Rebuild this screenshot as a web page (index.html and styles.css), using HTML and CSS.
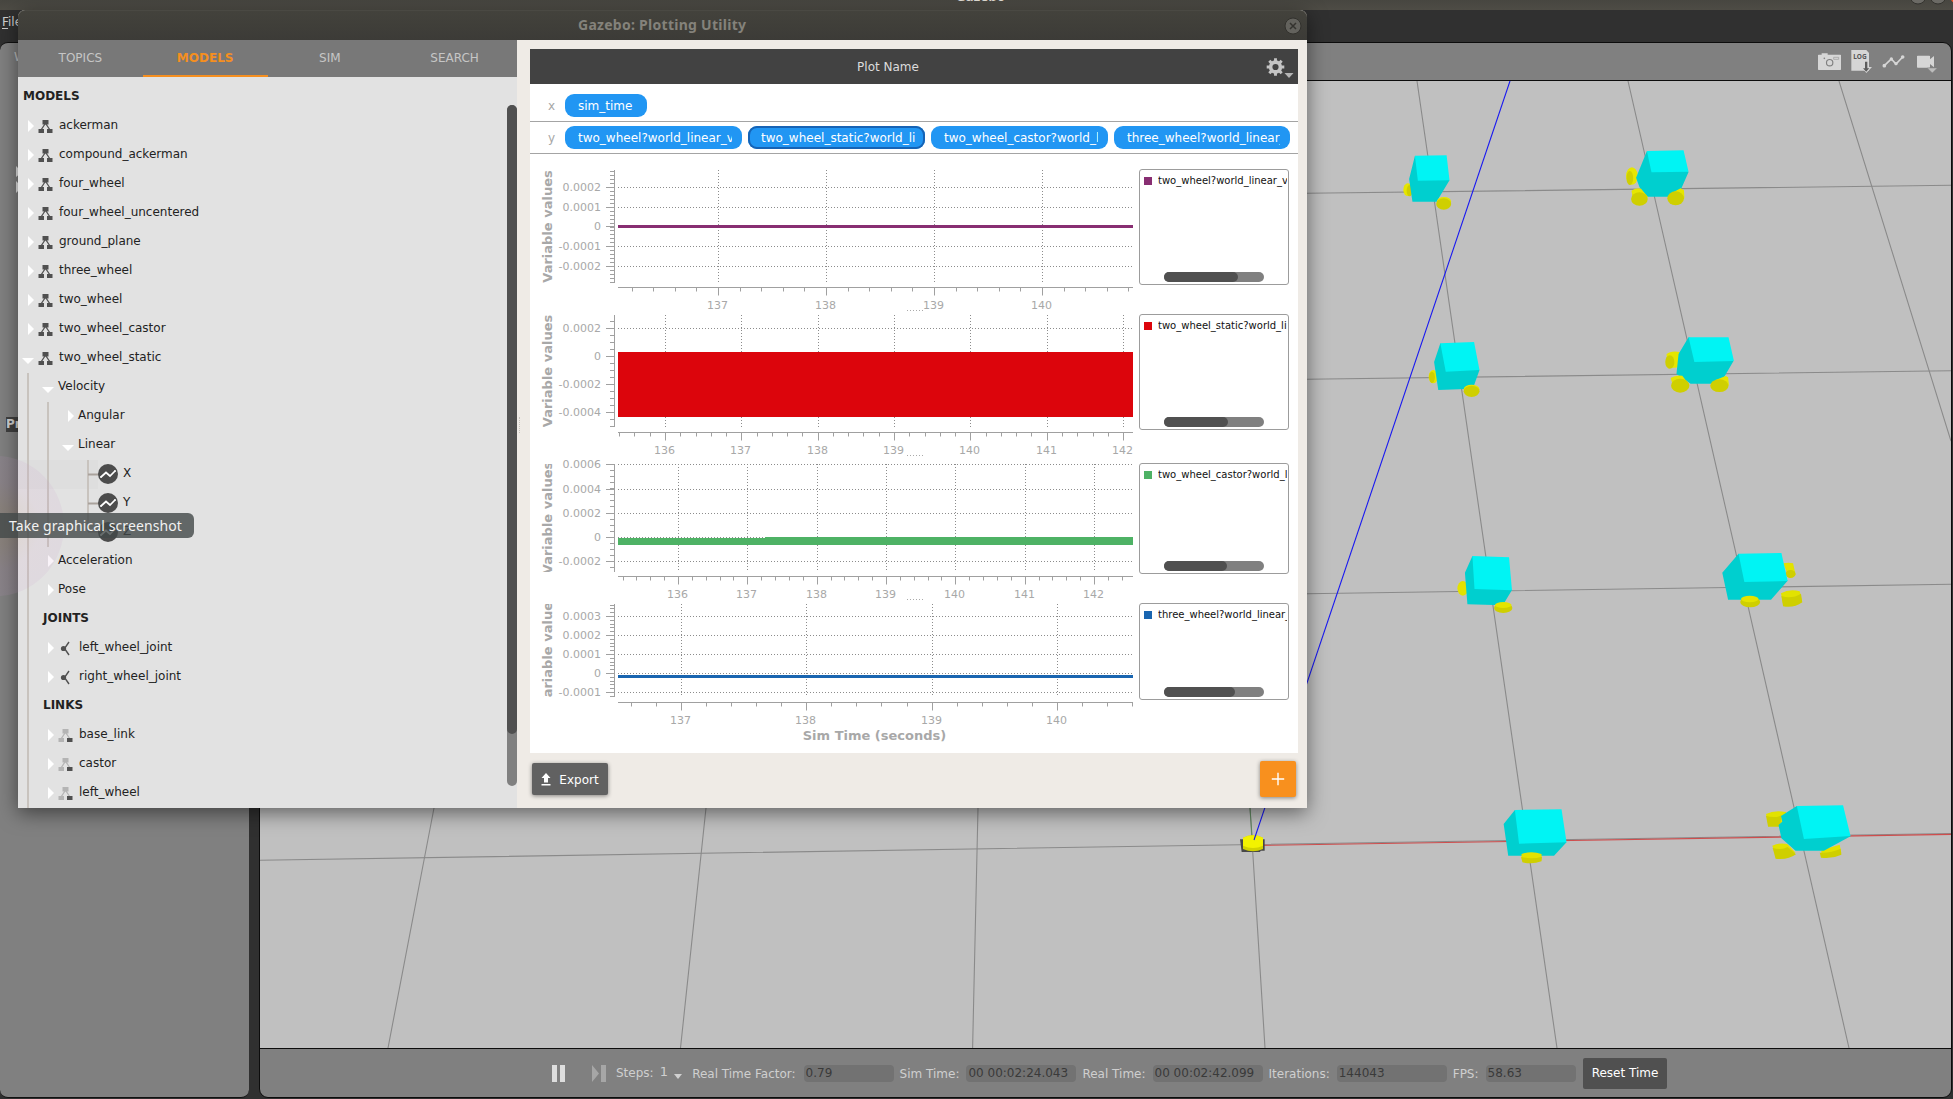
FILE: index.html
```html
<!DOCTYPE html>
<html lang="en">
<head>
<meta charset="utf-8">
<title>Gazebo</title>
<link rel="stylesheet" href="styles.css">
</head>
<body>
<svg class="defs" width="0" height="0">
  <symbol id="closed" viewBox="0 0 14 29"><path d="M6 8l6 6-6 6z" fill="#fff"/></symbol>
  <symbol id="open" viewBox="0 0 14 29"><path d="M0 14h12l-6 6z" fill="#fff"/></symbol>
  <symbol id="model" viewBox="0 0 22 29"><path d="M8 12L4 18M9 12l4 6" stroke="#505050" stroke-width="1.3"/><path d="M5.500 8h6v4.500h-6zM1.500 17h5.500v4h-5.500zM10 17h5.500v4h-5.500z" fill="#505050"/></symbol>
  <symbol id="link" viewBox="0 0 22 29"><path d="M8 12L4 18M9 12l4 6" stroke="#b4b4b4" stroke-width="1.3"/><path d="M5.500 8h6v4.500h-6zM1.500 17h5.500v4h-5.500z" fill="#b4b4b4"/><path d="M10 17h5.500v4h-5.500z" fill="#505050"/></symbol>
  <symbol id="joint" viewBox="0 0 22 29"><path d="M12 8L7.500 14.500 12 21" fill="none" stroke="#505050" stroke-width="1.400"/><circle cx="6.500" cy="14.500" r="2.600" fill="#505050"/></symbol>
  <symbol id="var" viewBox="0 0 20 29"><circle cx="10" cy="14" r="10" fill="#4c4c4c"/><path d="M3 17l5-4.500 4 3.500 5-5" fill="none" stroke="#fff" stroke-width="1.700"/><circle cx="3" cy="17" r="1" fill="#fff"/><circle cx="17" cy="11" r="1" fill="#fff"/></symbol>
</svg>

<div class="app">
  <div class="titlebar"><span class="app-name">Gazebo</span>
    <svg class="win-buttons" width="50" height="10" viewBox="1903 0 50 10"><g fill="#6b6a65" stroke="#34332f"><circle cx="1918" cy="-4" r="8"/><circle cx="1938" cy="-4" r="8"/></g><circle cx="1958" cy="-4" r="8" fill="#e9562b"/></svg>
  </div>
  <div class="menubar"><span><u>F</u>ile</span></div>
  <div class="workspace">
    <aside class="side">
      <div class="side-tab">World</div>
      <svg class="side-arrows" width="10" height="28" viewBox="0 0 10 28"><path d="M0 0l6 6-6 5zM0 15l6 6-6 6z" fill="#e8e8e8"/></svg>
      <div class="side-prop">Property</div>
    </aside>
    <main class="view">
      <div class="toolbar">
        <svg class="i-cam" width="25" height="24" viewBox="72 147 75 72"><path d="M86 164v-4h18v4h38q2 0 2 2v42q0 2-2 2H77q-2 0-2-2v-42q0-2 2-2z" fill="#d6d6d6"/><circle cx="110" cy="188" r="9.500" fill="none" stroke="#808080" stroke-width="3.500"/><path d="M122 172h15v6h-15z" fill="none" stroke="#999" stroke-width="2"/><circle cx="94" cy="175" r="2.500" fill="#808080"/></svg>
        <svg class="i-log" width="22" height="24" viewBox="171 147 66 72"><path d="M175 150h45l8 9v53h-53z" fill="#d6d6d6"/><path d="M205 201h7v-18h15v18h10l-17 18z" fill="#d6d6d6"/><path d="M216 185h7v20h6l-9.500 10-9.500-10h6z" fill="#5c5c5c"/><text x="181" y="176" class="log" textLength="40" lengthAdjust="spacingAndGlyphs">LOG</text></svg>
        <svg class="i-plot" width="25" height="24" viewBox="264 147 75 72"><path d="M274 197l21-20 14 15 20-21" fill="none" stroke="#d6d6d6" stroke-width="5"/><g fill="#d6d6d6"><circle cx="274" cy="197" r="5.500"/><circle cx="295" cy="177" r="5"/><circle cx="309" cy="191" r="5"/><circle cx="329" cy="171" r="5.500"/></g></svg>
        <svg class="i-video" width="23" height="24" viewBox="366 147 69 72"><path d="M374 167h35q2 0 2 2v9l12-10v34l-12-10v9q0 2-2 2h-35q-2 0-2-2v-32q0-2 2-2z" fill="#d6d6d6"/><path d="M403 204h30l-15 15z" fill="#bdbdbd" stroke="#808080" stroke-width="1.500"/></svg>
      </div>
      <svg class="scene" width="1691" height="967" viewBox="260 81 1691 967">
        <g stroke="#8a8a8a" stroke-width="1.100">
          <path d="M1417 81L1557 1048M1628 81L1849 1048M1839 81L1951 441M1250 808L1265 1048M706 808L680.500 1048M978 808L972.600 1048M434 808L388 1048"/>
          <path d="M1307 193.300L1951 185.300M1307 379.300L1951 370.700M1307 593.700L1951 584.300M260 860.300L1951 833.500"/>
        </g>
        <path d="M1250 808l2 28" stroke="#5f8a5f"/>
        <path d="M1262 845.400L1951 834.400" stroke="#cf4d4d" stroke-width="1.100"/>
        <g transform="translate(1200 790) scale(.33333)"><path d="M120 148h74v34h-12l-2 4H125z" fill="#484848"/><path d="M129 143q30-14 60 0v34q-30 14-60 0z" fill="#d2d200"/><path d="M129 143q30-14 60 0v24q-30 14-60 0z" fill="#f3f300"/></g>
        <path d="M1510 81L1254 840" stroke="#1818f0" stroke-width="1.100"/>
        <g transform="translate(1300 0) scale(.41645 .33333)">
          <g fill="#e6e600"><ellipse cx="259" cy="569" rx="11" ry="19"/><ellipse cx="797" cy="528" rx="14" ry="26"/><ellipse cx="320" cy="1130" rx="11" ry="20"/><path d="M880 1063q10-12 32-7v46l-28 3z"/></g>
          <g fill="#cfcf00"><ellipse cx="263" cy="572" rx="7" ry="17"/><ellipse cx="792" cy="534" rx="8" ry="21"/><ellipse cx="317" cy="1132" rx="7" ry="17"/><ellipse cx="888" cy="1086" rx="11" ry="20"/></g>
          <path d="M276 467l-14 70 8 68h58l31-64-60-60zM833 453l-26 80 8 28 16 29h76l26-74-60-50zM337 1030l-15 56 10 84 83-4 16-56-60-50zM933 1012l-24 50-5 60 34 29h71l32-68-60-50z" fill="#00cfcf"/>
          <path d="M276 467l76-1 7 75-76 1zM833 453l88-2 12 64-89 2zM337 1030l81-4 13 84-81 5zM933 1012h96l13 71-95 3z" fill="#00f4f4"/>
          <g fill="#e6e600"><ellipse cx="346" cy="605" rx="17" ry="14"/><path d="M796 572q12-10 23-6l17 26-36 10zM896 577l18-12 8 6 1 24-20 0z"/><path d="M890 1134q12-10 28-7l17 28-38 6zM998 1140l24-12 6 4 2 24-26 0z"/><ellipse cx="412" cy="1168" rx="19" ry="14"/></g>
          <g fill="#cfcf00"><ellipse cx="345" cy="612" rx="18" ry="17"/><ellipse cx="815" cy="597" rx="20" ry="20"/><ellipse cx="902" cy="595" rx="20" ry="21"/><ellipse cx="412" cy="1174" rx="19" ry="17"/><ellipse cx="913" cy="1157" rx="22" ry="21"/><ellipse cx="1007" cy="1157" rx="22" ry="19"/></g>
        </g>
        <g transform="translate(1300 420) scale(.41645 .33333)">
          <g fill="#e2e200"><ellipse cx="391" cy="505" rx="13" ry="22"/><path d="M1160 430q14-4 24 0l6 34-15 10zM1119 1182q20-13 48-6v30l-42 10zM1252 1290l44-16 4 26-48 5z"/></g>
          <g fill="#cfcf00"><ellipse cx="1178" cy="462" rx="12" ry="12"/><path d="M1119 1187q19 9 37-1l-3 34h-29zM1248 1298q26 2 50-12l2 18q-24 14-49 9z"/></g>
          <path d="M414 408l-18 50 6 95 85 3 22-46-60-50zM1053 401l-39 57 14 81h103l40-57-60-50zM516 1170l-27 42 11 95h110l30-40-60-50zM1193 1158l-38 30 3 17-9 10 7 40 34 37h68l64-43-60-60z" fill="#00cfcf"/>
          <path d="M414 408l88 4 7 99-90-4zM1053 401l103-2 15 84-104 3zM516 1170l112-2 12 99-114 4zM1193 1158l111-2 18 92-112 9z" fill="#00f4f4"/>
          <path d="M1155 520q20-14 45-6l6 33-46 6zM532 1302q24-10 48 0v16h-48zM1134 1277q18-10 36-5l20 26-48 6z" fill="#e2e200"/>
          <path d="M1156 528q25 10 47-7l3 26q-20 18-46 12zM531 1310q24 9 50 0l-1 14q-22 10-46 3zM1135 1284q22 7 36-3l20 22q-20 18-49 13z" fill="#cfcf00"/>
          <g fill="#cfcf00"><ellipse cx="488" cy="564" rx="22" ry="15"/><ellipse cx="1081" cy="546" rx="24" ry="16"/></g>
          <g fill="#e4e400"><ellipse cx="488" cy="555" rx="20" ry="9"/><ellipse cx="1080" cy="537" rx="21" ry="10"/></g>
        </g>
      </svg>
      <footer class="status">
        <svg class="play" width="56" height="20" viewBox="552 1062 56 20"><path d="M552 1064h5v17h-5zM560 1064h5v17h-5z" fill="#dedede"/><path d="M592 1064l7 8.500-7 8.500zM601 1064h5v17h-5z" fill="#a6a6a6"/></svg>
        <span class="lbl steps">Steps:</span><span class="num">1</span><i class="drop"></i>
        <span class="lbl rtf">Real Time Factor:</span><span class="field f90">0.79</span>
        <span class="lbl">Sim Time:</span><span class="field">00 00:02:24.043</span>
        <span class="lbl">Real Time:</span><span class="field">00 00:02:42.099</span>
        <span class="lbl">Iterations:</span><span class="field">144043</span>
        <span class="lbl">FPS:</span><span class="field f90">58.63</span>
        <span class="reset">Reset Time</span>
      </footer>
    </main>
  </div>
</div>

<section class="dialog">
  <header class="dlg-title"><span>Gazebo: Plotting Utility</span><svg width="18" height="18" viewBox="0 0 18 18"><circle cx="9" cy="9" r="8" fill="#63625d" stroke="#32312d"/><path d="M6 6l6 6M12 6l-6 6" stroke="#34332f" stroke-width="1.500"/></svg></header>
  <div class="dlg-body">
    <div class="left">
      <nav class="tabs"><span>TOPICS</span><span class="on">MODELS</span><span>SIM</span><span>SEARCH</span></nav>
      <div class="tree">
        <div class="hl"></div>
        <svg class="guides" width="90" height="731" viewBox="18 77 90 731"><path d="M28 373v435M48 402v145M88 460v72" stroke="#c8c3be" stroke-width="2"/><path d="M88 474.500h11M88 503.500h11M88 531.500h11" stroke="#a9a29c" stroke-width="2"/></svg>
        <div class="row head">MODELS</div>
        <div class="row"><svg class="a"><use href="#closed"/></svg><svg class="m"><use href="#model"/></svg>ackerman</div>
        <div class="row"><svg class="a"><use href="#closed"/></svg><svg class="m"><use href="#model"/></svg>compound_ackerman</div>
        <div class="row"><svg class="a"><use href="#closed"/></svg><svg class="m"><use href="#model"/></svg>four_wheel</div>
        <div class="row"><svg class="a"><use href="#closed"/></svg><svg class="m"><use href="#model"/></svg>four_wheel_uncentered</div>
        <div class="row"><svg class="a"><use href="#closed"/></svg><svg class="m"><use href="#model"/></svg>ground_plane</div>
        <div class="row"><svg class="a"><use href="#closed"/></svg><svg class="m"><use href="#model"/></svg>three_wheel</div>
        <div class="row"><svg class="a"><use href="#closed"/></svg><svg class="m"><use href="#model"/></svg>two_wheel</div>
        <div class="row"><svg class="a"><use href="#closed"/></svg><svg class="m"><use href="#model"/></svg>two_wheel_castor</div>
        <div class="row"><svg class="a"><use href="#open"/></svg><svg class="m"><use href="#model"/></svg>two_wheel_static</div>
        <div class="row l1 plain"><svg class="a"><use href="#open"/></svg>Velocity</div>
        <div class="row l2 plain"><svg class="a"><use href="#closed"/></svg>Angular</div>
        <div class="row l2 plain"><svg class="a"><use href="#open"/></svg>Linear</div>
        <div class="row l3"><svg class="v"><use href="#var"/></svg>X</div>
        <div class="row l3"><svg class="v"><use href="#var"/></svg>Y</div>
        <div class="row l3"><svg class="v"><use href="#var"/></svg>Z</div>
        <div class="row l1 plain"><svg class="a"><use href="#closed"/></svg>Acceleration</div>
        <div class="row l1 plain"><svg class="a"><use href="#closed"/></svg>Pose</div>
        <div class="row head h1">JOINTS</div>
        <div class="row l1"><svg class="a"><use href="#closed"/></svg><svg class="m"><use href="#joint"/></svg>left_wheel_joint</div>
        <div class="row l1"><svg class="a"><use href="#closed"/></svg><svg class="m"><use href="#joint"/></svg>right_wheel_joint</div>
        <div class="row head h1">LINKS</div>
        <div class="row l1"><svg class="a"><use href="#closed"/></svg><svg class="m"><use href="#link"/></svg>base_link</div>
        <div class="row l1"><svg class="a"><use href="#closed"/></svg><svg class="m"><use href="#link"/></svg>castor</div>
        <div class="row l1"><svg class="a"><use href="#closed"/></svg><svg class="m"><use href="#link"/></svg>left_wheel</div>
        <div class="vscroll"><div></div></div>
      </div>
    </div>
    <div class="grip"></div>
    <div class="right">
      <div class="canvas">
        <div class="plot-head"><span>Plot Name</span>
          <svg class="gear" width="28" height="24" viewBox="0 0 28 24"><g transform="translate(9.500 11)"><circle r="4.900" fill="none" stroke="#c4c4c4" stroke-width="3.600"/><g stroke="#c4c4c4" stroke-width="2.900"><path d="M0-8.800v3M0 8.800v-3M-8.800 0h3M8.800 0h-3M-6.200-6.200l2.100 2.100M6.200 6.200l-2.100-2.100M-6.200 6.200l2.100-2.100M6.200-6.200l-2.100 2.100"/></g></g><path d="M18.500 17h9l-4.500 5z" fill="#b4b4b4"/></svg>
        </div>
        <div class="vars x"><label>x</label><span class="pill fit"><b>sim_time</b></span></div>
        <div class="vars y"><label>y</label><span class="pill"><b>two_wheel?world_linear_velocity</b></span><span class="pill sel"><b>two_wheel_static?world_linear</b></span><span class="pill"><b>two_wheel_castor?world_linear</b></span><span class="pill"><b>three_wheel?world_linear_vel</b></span></div>
        <div id="plots"></div>
      </div>
      <div class="actions">
        <button class="export"><svg width="10" height="13" viewBox="0 0 10 13"><path d="M5 0l4.500 5H7v4.500H3V5H.5zM.5 11h9v1.600h-9z" fill="#fff"/></svg>Export</button>
        <button class="add"><svg width="14" height="14" viewBox="0 0 14 14"><path d="M7 .8v12.400M.8 7h12.400" stroke="#fff" stroke-width="1.400"/></svg></button>
      </div>
    </div>
  </div>
</section>
<div class="halo"></div>
<div class="tooltip">Take graphical screenshot</div>
<script src="plots.js"></script>
</body>
</html>
```
FILE: styles.css
```css
* { box-sizing: border-box; }
body { margin: 0; width: 1953px; height: 1099px; overflow: hidden; position: relative; background: #303030; font: 12px/14px "DejaVu Sans", sans-serif; color: #222; }
svg { display: block; flex: none; }
.defs { position: absolute; }
.app { display: flex; flex-direction: column; height: 1099px; }
.titlebar { position: relative; height: 10px; overflow: hidden; background: linear-gradient(#474640, #4e4c45); }
.app-name { position: absolute; left: 956px; top: -13px; font: bold 13px/18px "Noto Sans", sans-serif; letter-spacing: .3px; color: #e0ddd5; }
.win-buttons { margin-left: auto; }
.menubar { height: 32px; padding: 5px 2px; color: #d0d0d0; }
.menubar u { text-underline-offset: 2px; }
.workspace { display: flex; gap: 10px; height: 1056px; }
.side { width: 249px; height: 1056px; background: #808080; border-radius: 8px; border: solid #111; border-width: 1px 0; color: #c4c4c4; }
.side-tab { padding: 7px 14px 8px; }
.side-arrows { margin: 94px 0 0 16px; }
.side-prop { margin: 223px 0 0 6px; width: 80px; height: 15px; background: #404040; color: #d0d0d0; font-weight: bold; }
.view { width: 1693px; height: 1056px; border: 1px solid #0c0c0c; border-radius: 9px; background: #808080; overflow: hidden; }
.toolbar { display: flex; height: 38px; padding: 6px 13px 0 0; justify-content: flex-end; border-bottom: 1px solid #0c0c0c; }
.i-log { margin-left: 8px; }
.i-plot, .i-video { margin-left: 9px; }
.log { font: bold 21px "Noto Sans", sans-serif; fill: #555; }
.scene { background: #c0c0c0; }
.status { display: flex; align-items: center; height: 49px; border-top: 1px solid #0c0c0c; padding-left: 292px; color: #cfcfcf; }
.lbl { margin: 1px 7px 0 6px; white-space: nowrap; }
.steps { margin: -1px 6px 0 8px; }
.rtf { margin-right: 8px; }
.num { font-size: 13px; width: 12px; margin-top: -2px; }
.drop { border: solid transparent; border-width: 5px 4.500px 0; border-top-color: #d0d0d0; margin: 7px 4px 0 2.500px; }
.field { width: 110px; height: 17px; line-height: 16px; padding-left: 2px; background: #727272; border-radius: 4px; color: #3a3a3a; white-space: nowrap; }
.field.f90 { width: 90px; }
.reset { width: 84px; height: 31px; margin-left: 7.500px; border-radius: 2px; background: #505050; color: #fff; text-align: center; line-height: 30px; }

.dialog { position: absolute; left: 18px; top: 10px; width: 1289px; height: 798px; border-radius: 7px 7px 0 0; box-shadow: 0 5px 20px rgba(0,0,0,.5); background: #efebe6; }
.dlg-title { display: flex; align-items: center; height: 30px; padding: 0 5px 0 560px; border-radius: 7px 7px 0 0; border-top: 1px solid #4a4943; background: linear-gradient(#43423c, #3c3b37); justify-content: space-between; font: bold 14px/20px "Noto Sans", sans-serif; letter-spacing: .27px; color: #84827b; }
.dlg-title span { margin-top: -2px; }
.dlg-body { display: flex; height: 768px; }
.left { width: 499px; }
.tabs { display: flex; height: 37px; background: #787878; color: #c6c6c6; overflow: hidden; }
.tabs span { width: 124.750px; flex: none; text-align: center; padding-top: 11px; }
.tabs .on { color: #f58f20; font-weight: bold; border-bottom: 2px solid #f58f20; }
.tree { position: relative; height: 731px; padding-top: 6px; background: #e2e2e2; overflow: hidden; }
.guides { position: absolute; left: 0; top: 0; }
.hl { position: absolute; left: 0; top: 383px; width: 80px; height: 29px; background: #dedede; }
.row { position: relative; display: flex; height: 29px; line-height: 26px; padding-left: 4px; white-space: nowrap; }
.row.head { font-weight: bold; padding-left: 5px; }
.row.h1 { padding-left: 25px; }
.row.l1 { padding-left: 24px; }
.row.l2 { padding-left: 44px; }
.row.l3 { padding-left: 80px; }
.a { width: 14px; height: 29px; margin-right: 1px; }
.plain .a { margin-right: 2px; }
.m { width: 22px; height: 29px; }
.v { width: 20px; height: 29px; margin-right: 5px; }
.vscroll { position: absolute; left: 489px; top: 28px; width: 10px; height: 681px; border-radius: 5px; background: #808080; }
.vscroll div { height: 629px; border-radius: 5px; background: #505050; }
.grip { width: 3px; height: 16px; margin-top: 377px; border-right: 1px dotted #c8c4be; }
.right { width: 780px; margin-left: 10px; padding-top: 9px; margin-right: -3px; }
.canvas { width: 768px; height: 704px; background: #fff; }
.plot-head { display: flex; height: 35px; padding-right: 4px; background: #424242; color: #dcdcdc; line-height: 36px; justify-content: flex-end; }
.plot-head span { flex: none; width: 120px; text-align: center; margin-right: 318px; }
.gear { margin: 7px 0 0; }
.vars { display: flex; border-bottom: 1px solid #a4a4a4; }
.vars label { width: 35px; padding-left: 18px; color: #a6a6a6; line-height: 25px; }
.vars.x { height: 38px; padding-top: 10px; }
.vars.y { height: 32px; padding-top: 4px; gap: 6px; }
.vars.y label { margin-right: -6px; }
.pill { width: 177px; height: 23px; border-radius: 9px; background: #2196f3; color: #fff; padding: 0 10px 0 13px; line-height: 24px; }
.pill:last-child { width: 176px; }
.pill.fit { width: 82px; }
.pill.sel { box-shadow: inset 0 0 0 2px #1663b5; }
.pill b { display: block; font-weight: normal; overflow: hidden; white-space: nowrap; }
.plot { display: flex; }
.plot text { font-size: 11px; fill: #a8a8a8; }
.plot .cap { font-size: 13px; font-weight: bold; }
.legend { position: relative; width: 150px; margin-left: 3px; border: 1px solid #9c9c9c; border-radius: 3px; font-size: 10px; line-height: 12px; color: #111; display: flex; }
.legend i { width: 8px; height: 8px; margin: 7px 6px 0 4px; flex: none; }
.legend span { width: 129px; margin-top: 5px; overflow: hidden; white-space: nowrap; }
.hscroll { position: absolute; left: 24px; bottom: 2px; width: 100px; height: 10px; border-radius: 5px; background: #808080; }
.hscroll div { height: 10px; border-radius: 5px; background: #505050; }
.actions { display: flex; justify-content: space-between; width: 766px; padding: 8px 0 0 2px; }
button { display: flex; align-items: center; justify-content: center; border: 0; padding: 0; color: #fff; font: 12px "DejaVu Sans", sans-serif; border-radius: 2px; box-shadow: 0 1px 4px rgba(0,0,0,.45); }
.export { width: 76px; height: 32px; margin-top: 2px; padding-top: 1px; background: #616161; gap: 8px; }
.add { width: 36px; height: 36px; background: #f8901e; }
.halo { position: absolute; left: -72px; top: 456px; width: 136px; height: 140px; border-radius: 50%; background: radial-gradient(circle, rgba(190,130,90,.12) 0 20%, rgba(205,140,190,.1) 45%, rgba(190,150,205,.12)); }
.tooltip { position: absolute; left: -8px; top: 513px; width: 202px; height: 25px; padding-left: 17px; border-radius: 6px; background: rgba(66,72,72,.8); color: #f2f2f2; font: 14px/25px "Noto Sans", sans-serif; letter-spacing: .1px; white-space: nowrap; }
```
FILE: plots.js
```javascript
// Each plot uses the window's own coordinates; x is the first major tick and dx the spacing.
const plots = [
  { top: 154, bottom: 311, y0: 170, y1: 283, ys: [[187.5, '0.0002'], [207.5, '0.0001'], [226.5, '0'], [246.5, '-0.0001'], [266.5, '-0.0002']], ny: 5, x: 718.5, dx: 108, nx: 4, first: 137, axis: 287.5, cap: 'Variable values', color: '#882e72', band: 'M618 225h515v3H618z', name: 'two_wheel?world_linear_velocity', ly: 169, lh: 116, knob: 74 },
  { top: 311, bottom: 456, y0: 315, y1: 427, ys: [[328.5, '0.0002'], [356.5, '0'], [384.5, '-0.0002'], [412.5, '-0.0004']], ny: 4, x: 665.5, dx: 76.34, nx: 7, first: 136, axis: 432.5, cap: 'Variable values', color: '#dc050c', band: 'M618 352h515v65H618z', name: 'two_wheel_static?world_linear', ly: 314, lh: 116, knob: 64 },
  { top: 456, bottom: 600, y0: 464, y1: 572, ys: [[464.5, '0.0006'], [489.5, '0.0004'], [513.5, '0.0002'], [537.5, '0'], [561.5, '-0.0002']], ny: 4, x: 678.5, dx: 69.33, nx: 7, first: 136, axis: 576.5, cap: 'Variable values', color: '#4eb265', band: 'M618 538H765V537h368v8H618z', name: 'two_wheel_castor?world_linear', ly: 463, lh: 111, knob: 63 },
  { top: 600, bottom: 753, y0: 604, y1: 697, ys: [[616.5, '0.0003'], [635.5, '0.0002'], [654.5, '0.0001'], [673.5, '0'], [692.5, '-0.0001']], ny: 5, x: 681.5, dx: 125.3, nx: 4, first: 137, axis: 702.5, cap: 'Variable values', color: '#1965b0', band: 'M618 675h515v3H618z', name: 'three_wheel?world_linear_vel', ly: 603, lh: 97, knob: 71 }
];
const snap = v => Math.floor(v) + 0.5;
document.getElementById('plots').innerHTML = plots.map((p, k) => {
  let grid = '', ticks = '', text = '';
  for (const [y, label] of p.ys) {
    grid += `M618 ${y}H1133`;
    ticks += `M606 ${y}h9`;
    text += `<text x="601" y="${y + 3.8}" text-anchor="end">${label}</text>`;
  }
  const step = (p.ys[p.ys.length - 1][0] - p.ys[0][0]) / (p.ys.length - 1) / p.ny;
  for (let i = -8; i < 40; i++) {
    const y = snap(p.ys[0][0] + i * step);
    if (y >= p.y0 && y <= p.y1) ticks += `M610 ${y}h5`;
  }
  for (let i = 0; i < p.nx; i++) {
    const x = snap(p.x + i * p.dx);
    grid += `M${x} ${p.y0}V${p.y1}`;
    ticks += `M${x} ${p.axis}v8`;
    text += `<text x="${x - 1}" y="${p.axis + 21.5}" text-anchor="middle">${p.first + i}</text>`;
  }
  for (let i = -8; i < 50; i++) {
    const x = snap(p.x + i * p.dx / 5);
    if (x >= 618 && x <= 1133) ticks += `M${x} ${p.axis}v4`;
  }
  const mid = (p.y0 + p.y1) / 2;
  const h = p.bottom - p.top;
  const sim = k === 3 ? '<text class="cap" x="874.500" y="740" text-anchor="middle">Sim Time (seconds)</text>' : '';
  const dots = k < 3 ? `<path d="M907 ${p.bottom - 0.5}h16" stroke="#aaa" stroke-dasharray="1 2"/>` : '';
  return `<div class="plot"><svg width="606" height="${h}" viewBox="530 ${p.top} 606 ${h}">
    <clipPath id="c${k}"><path d="M530 ${p.y0}h60V${p.y1}h-60z"/></clipPath>
    <path d="${grid}" stroke="#8c8c8c" stroke-dasharray="1 2" fill="none"/>
    <path d="${ticks}M614.500 ${p.y0}V${p.y1}M618 ${p.axis}H1133" stroke="#a0a0a0" fill="none"/>
    <path d="${p.band}" fill="${p.color}"/>${text}${sim}${dots}
    <g clip-path="url(#c${k})"><text class="cap" transform="translate(552 ${mid}) rotate(-90)" text-anchor="middle">${p.cap}</text></g></svg>
    <div class="legend" style="height:${p.lh}px;margin-top:${p.ly - p.top}px"><i style="background:${p.color}"></i><span>${p.name}</span><div class="hscroll"><div style="width:${p.knob}px"></div></div></div></div>`;
}).join('');
```
